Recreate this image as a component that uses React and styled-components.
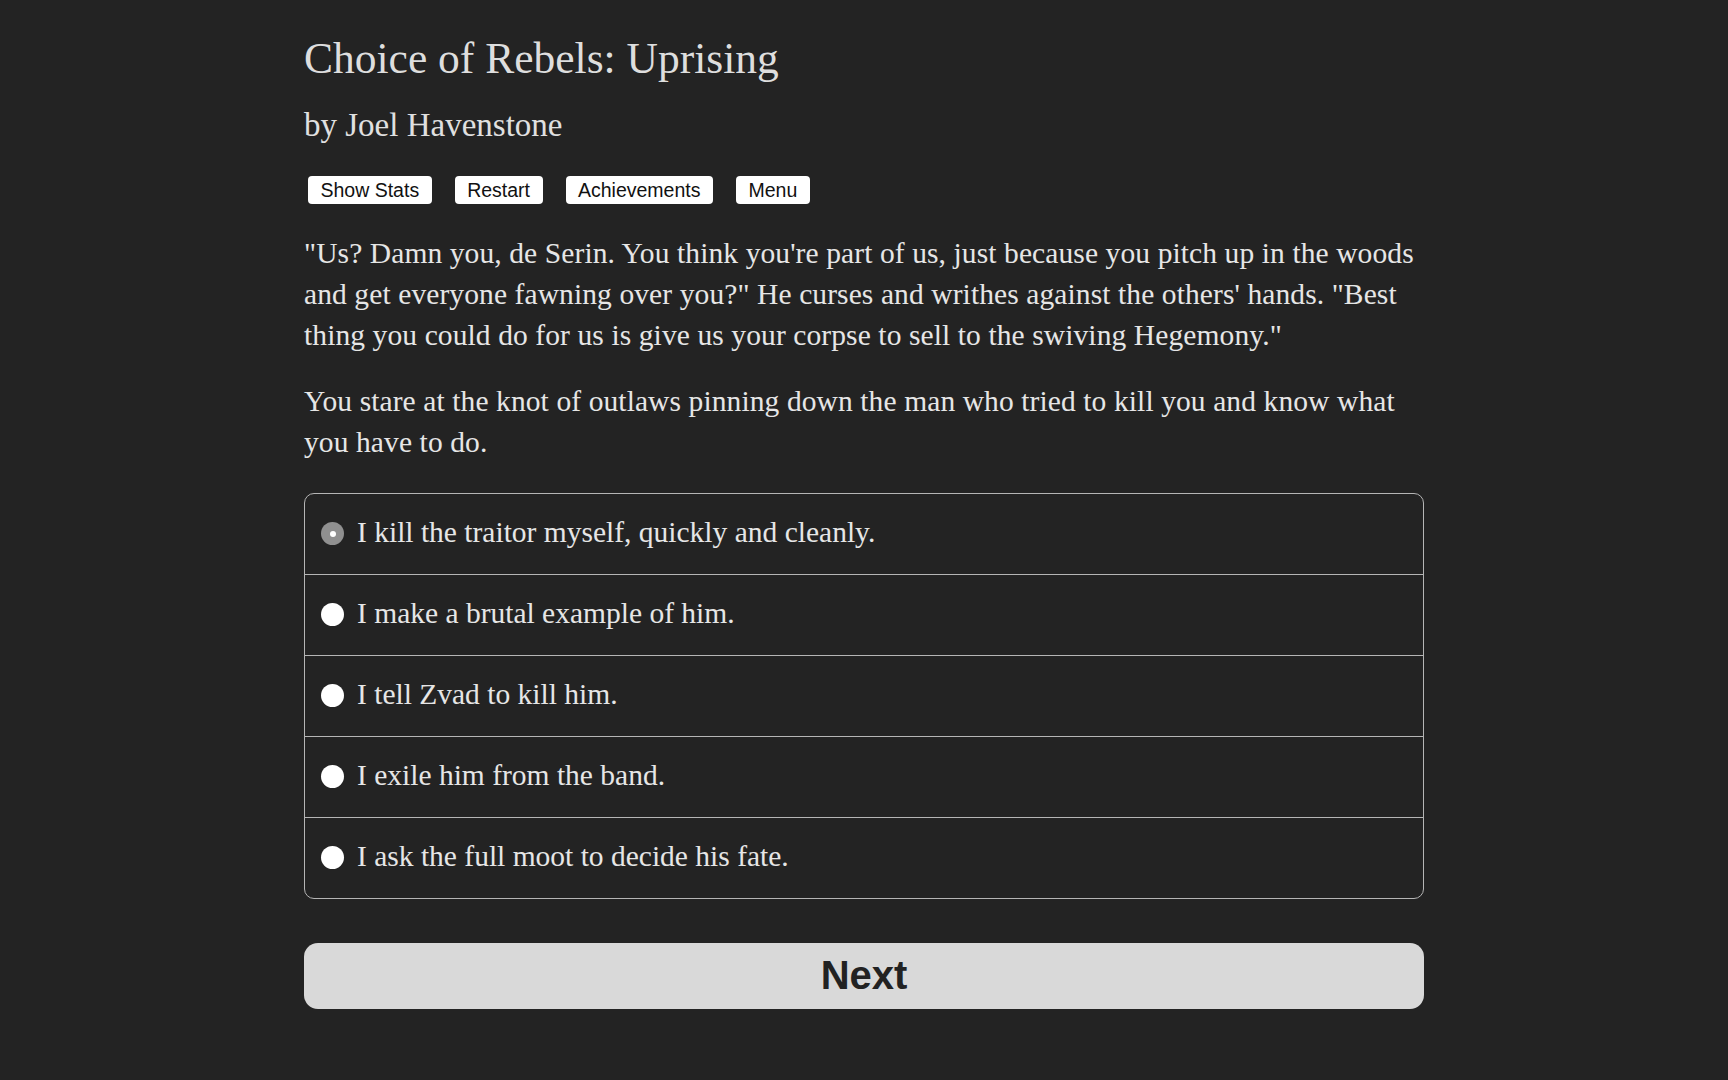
import React, { useState } from "react";
import styled, { createGlobalStyle } from "styled-components";

const GlobalStyle = createGlobalStyle`
    html, body {
        margin: 0;
        padding: 0;
        background: #232323;
    }
    body {
        font-family: "Palatino Linotype", "Book Antiqua", Palatino, "Liberation Serif", serif;
        color: #e6e6e6;
    }
`;

const Page = styled.div`
    max-width: 1120px;
    margin: 0 auto;
    padding-top: 32px;
    padding-bottom: 60px;
`;

const Title = styled.h1`
    margin: 0;
    font-size: 43.5px;
    font-weight: normal;
    line-height: 52px;
    color: #dedede;
`;

const Author = styled.h2`
    margin: 21px 0 0;
    font-size: 33px;
    font-weight: normal;
    line-height: 40px;
    color: #e0e0e0;
`;

const Toolbar = styled.div`
    display: flex;
    gap: 23px;
    margin: 31px 0 0 4px;
`;

const MenuButton = styled.button`
    height: 28px;
    padding: 0 12.5px;
    border: none;
    border-radius: 4px;
    background: #fff;
    color: #111;
    font-family: "Liberation Sans", Arial, sans-serif;
    font-size: 19.5px;
    line-height: 28px;
    cursor: pointer;
`;

const Text = styled.p`
    margin: ${(p) => (p.$first ? "29px" : "26px")} 0 0;
    font-size: 29.5px;
    line-height: 40.8px;
    letter-spacing: 0.1px;
`;

const ChoiceList = styled.div`
    margin-top: 30px;
    border: 1px solid #b5b5b5;
    border-radius: 10px;
    overflow: hidden;
`;

const Choice = styled.label`
    display: flex;
    align-items: center;
    gap: 13px;
    height: 77px;
    padding: 0 16px 3px;
    font-size: 29.5px;
    cursor: pointer;
    & + & {
        border-top: 1px solid #b5b5b5;
    }
`;

const Radio = styled.span`
    flex: none;
    position: relative;
    width: 23px;
    height: 23px;
    margin-top: 3px;
    border-radius: 50%;
    background: ${(p) => (p.$checked ? "#909090" : "#fff")};
    &::after {
        content: "";
        display: ${(p) => (p.$checked ? "block" : "none")};
        position: absolute;
        left: 8.5px;
        top: 8.5px;
        width: 6px;
        height: 6px;
        border-radius: 50%;
        background: #fff;
    }
`;

const NextButton = styled.button`
    display: block;
    width: 100%;
    height: 66px;
    margin-top: 44px;
    border: none;
    border-radius: 14px;
    background: #d9d9d9;
    color: #222;
    font-family: "Liberation Sans", Arial, sans-serif;
    font-size: 40px;
    font-weight: bold;
    cursor: pointer;
`;

const choices = [
    "I kill the traitor myself, quickly and cleanly.",
    "I make a brutal example of him.",
    "I tell Zvad to kill him.",
    "I exile him from the band.",
    "I ask the full moot to decide his fate.",
];

export default function App() {
    const [selected, setSelected] = useState(0);

    return (
        <>
            <GlobalStyle />
            <Page>
                <Title>Choice of Rebels: Uprising</Title>
                <Author>by Joel Havenstone</Author>
                <Toolbar>
                    <MenuButton>Show Stats</MenuButton>
                    <MenuButton>Restart</MenuButton>
                    <MenuButton>Achievements</MenuButton>
                    <MenuButton>Menu</MenuButton>
                </Toolbar>
                <Text $first>
                    "Us? Damn you, de Serin. You think you're part of us, just because you pitch up in the woods and get everyone fawning over
                    you?" He curses and writhes against the others' hands. "Best thing you could do for us is give us your corpse to sell to the
                    swiving Hegemony."
                </Text>
                <Text>You stare at the knot of outlaws pinning down the man who tried to kill you and know what you have to do.</Text>
                <ChoiceList>
                    {choices.map((c, i) => (
                        <Choice key={c} onClick={() => setSelected(i)}>
                            <Radio $checked={selected === i} />
                            {c}
                        </Choice>
                    ))}
                </ChoiceList>
                <NextButton>Next</NextButton>
            </Page>
        </>
    );
}
